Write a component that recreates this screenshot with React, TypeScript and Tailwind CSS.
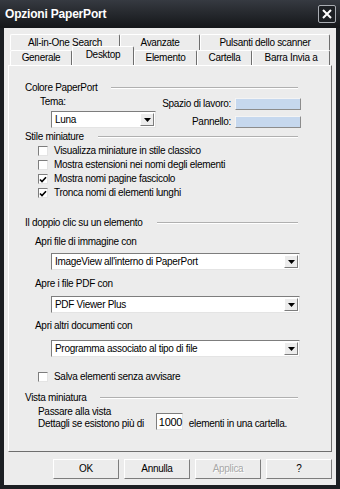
import type { ReactNode } from 'react'

const raised = 'border border-t-white border-l-white border-b-[#7d7d7d] border-r-[#7d7d7d]'
const sunken = 'border border-t-[#7d7d7d] border-l-[#7d7d7d] border-b-[#e4e4e4] border-r-[#e4e4e4]'

function Heading({ children }: { children: ReactNode }) {
  return (
    <div className="flex h-[12px] items-center gap-[14px]">
      <span className="whitespace-nowrap">{children}</span>
      <span className="flex-1 border-t border-t-[#b0b0b0] border-b border-b-white" />
    </div>
  )
}

function Checkbox({ checked, label }: { checked?: boolean; label: string }) {
  return (
    <div className="flex h-[14px] items-center gap-[6px] pl-[13px]">
      <span className={`flex h-[10px] w-[10px] items-center justify-center bg-white ${sunken}`}>
        {checked && (
          <svg width="8" height="7" viewBox="0 0 8 7">
            <path d="M1 3.5 L3 5.5 L7 1.2" fill="none" stroke="#000" strokeWidth="1.6" />
          </svg>
        )}
      </span>
      <span>{label}</span>
    </div>
  )
}

function Select({ value, className = '' }: { value: string; className?: string }) {
  return (
    <div className={`flex h-[17px] items-center bg-white ${sunken} ${className}`}>
      <span className="flex-1 pl-[3px] whitespace-nowrap">{value}</span>
      <span className={`mr-[1px] flex h-[13px] w-[14px] items-center justify-center bg-[#ececec] ${raised}`}>
        <svg width="7" height="4" viewBox="0 0 7 4">
          <path d="M0 0 H7 L3.5 4 Z" fill="#000" />
        </svg>
      </span>
    </div>
  )
}

function Tab({ label, w, selected }: { label: string; w: string; selected?: boolean }) {
  return (
    <div
      className={`flex items-center justify-center rounded-t-[2px] border-l border-t border-r border-l-white border-t-white border-r-[#6e6e6e] bg-[#ececec] ${w} ${
        selected ? 'relative z-10 -mt-[3px] h-[19px] pb-[2px]' : 'h-full'
      }`}
    >
      {label}
    </div>
  )
}

function Button({ label, disabled }: { label: string; disabled?: boolean }) {
  return (
    <div
      className={`flex h-[20px] w-[66px] items-center justify-center bg-[#ececec] ${raised} ${
        disabled ? 'text-[#a8a8a8] [text-shadow:1px_1px_0_#fff]' : ''
      }`}
    >
      {label}
    </div>
  )
}

export default function App() {
  return (
    <div className="flex h-[489px] w-[340px] flex-col bg-[#1c1f23] font-['Liberation_Sans',Arial,sans-serif] text-[10px] leading-[12px] tracking-[-0.3px] text-black">
      {/* titolo */}
      <div className="flex h-[28px] items-center justify-between bg-gradient-to-b from-[#363a41] to-[#15171a] pl-[5px] pr-[4px]">
        <span className="text-[12px] font-bold tracking-[-0.2px] text-white">Opzioni PaperPort</span>
        <span className="flex h-[18px] w-[18px] items-center justify-center rounded-[2px] border border-[#a9adb3] bg-[#1d2024]">
          <svg width="10" height="10" viewBox="0 0 10 10">
            <path d="M1 1 L9 9 M9 1 L1 9" stroke="#fff" strokeWidth="2" />
          </svg>
        </span>
      </div>

      <div className="mx-[4px] mb-[4px] flex flex-1 flex-col bg-[#ececec] pt-[6px]">
        {/* schede */}
        <div className="ml-[6px] flex h-[16px]">
          <Tab label="All-in-One Search" w="w-[110px]" />
          <Tab label="Avanzate" w="w-[80px]" />
          <Tab label="Pulsanti dello scanner" w="w-[130px]" />
        </div>
        <div className="ml-[6px] flex h-[15px] items-end">
          <Tab label="Generale" w="w-[62px]" />
          <Tab label="Desktop" w="w-[62px]" selected />
          <Tab label="Elemento" w="w-[63px]" />
          <Tab label="Cartella" w="w-[55px]" />
          <Tab label="Barra Invia a" w="w-[78px]" />
        </div>

        {/* pannello */}
        <div className="mx-[4px] flex h-[387px] flex-col border border-t-white border-l-white border-b-[#6e6e6e] border-r-[#6e6e6e] pl-[16px] pr-[33px] pt-[16px]">
          <Heading>Colore PaperPort</Heading>
          <div className="flex">
            <div className="flex flex-col">
              <div className="mt-[2px] h-[12px] pl-[15px]">Tema:</div>
              <Select value="Luna" className="ml-[26px] mt-[3px] h-[15px] w-[105px]" />
            </div>
            <div className="-mr-[3px] ml-auto mt-[4px] grid grid-cols-[auto_66px] items-center gap-x-[4px] gap-y-[6px]">
              <span className="text-right">Spazio di lavoro:</span>
              <span className="h-[12px] border border-t-[#f4f4f4] border-l-[#f4f4f4] border-b-[#8c8c8c] border-r-[#8c8c8c] bg-[#c6d8ee]" />
              <span className="text-right">Pannello:</span>
              <span className="h-[12px] border border-t-[#f4f4f4] border-l-[#f4f4f4] border-b-[#8c8c8c] border-r-[#8c8c8c] bg-[#c6d8ee]" />
            </div>
          </div>
          <div className="mt-[3px]">
            <Heading>Stile miniature</Heading>
          </div>
          <div className="mt-[1px] flex flex-col">
            <Checkbox label="Visualizza miniature in stile classico" />
            <Checkbox label="Mostra estensioni nei nomi degli elementi" />
            <Checkbox checked label="Mostra nomi pagine fascicolo" />
            <Checkbox checked label="Tronca nomi di elementi lunghi" />
          </div>

          <div className="mt-[17px]">
            <Heading>Il doppio clic su un elemento</Heading>
          </div>
          <div className="mt-[7px] pl-[10px]">Apri file di immagine con</div>
          <Select value="ImageView all'interno di PaperPort" className="-mr-[2px] ml-[26px] mt-[5px]" />
          <div className="mt-[8px] pl-[10px]">Apre i file PDF con</div>
          <Select value="PDF Viewer Plus" className="-mr-[2px] ml-[26px] mt-[6px]" />
          <div className="mt-[7px] pl-[10px]">Apri altri documenti con</div>
          <Select value="Programma associato al tipo di file" className="-mr-[2px] ml-[26px] mt-[8px]" />

          <div className="mt-[13px]">
            <Checkbox label="Salva elementi senza avvisare" />
          </div>

          <div className="mt-[8px]">
            <Heading>Vista miniatura</Heading>
          </div>
          <div className="mt-[2px] flex items-end pl-[13px]">
            <div className="flex flex-col">
              <span>Passare alla vista</span>
              <span>Dettagli se esistono più di</span>
            </div>
            <span className={`ml-[12px] flex h-[17px] w-[27px] items-center bg-white pl-[2px] text-[11px] ${sunken}`}>1000</span>
            <span className="ml-[6px]">elementi in una cartella.</span>
          </div>
        </div>

        {/* pulsanti */}
        <div className="mt-[7px] flex justify-end gap-[5px] pr-[4px]">
          <Button label="OK" />
          <Button label="Annulla" />
          <Button label="Applica" disabled />
          <Button label="?" />
        </div>
      </div>
    </div>
  )
}
